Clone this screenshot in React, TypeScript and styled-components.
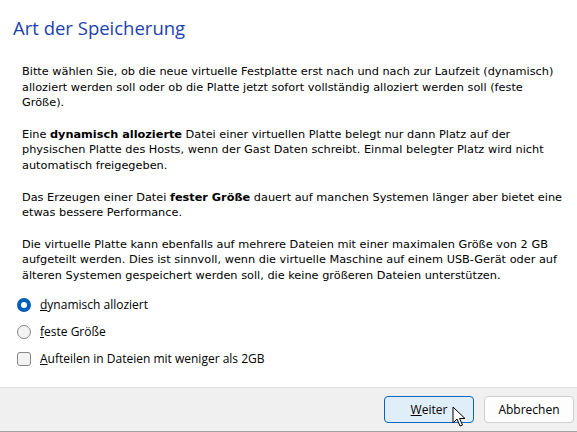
import React from "react";
import styled, { createGlobalStyle } from "styled-components";

const Global = createGlobalStyle`
  html, body { margin: 0; padding: 0; background: #ffffff; }
  body { width: 577px; height: 432px; overflow: hidden; }
`;

const Dialog = styled.div`
  width: 577px;
  height: 432px;
  display: flex;
  flex-direction: column;
  background: #ffffff;
`;

const Content = styled.div`
  flex: 1;
  display: flex;
  flex-direction: column;
  padding: 14px 0 0 13px;
`;

const Title = styled.h1`
  margin: 0;
  font-family: "Open Sans", "Noto Sans", sans-serif;
  font-weight: 400;
  font-size: 18.5px;
  line-height: 27px;
  color: #1d3fae;
`;

const Body = styled.div`
  padding: 23px 0 0 9px;
  font-family: "DejaVu Sans", sans-serif;
  font-size: 11.3px;
  line-height: 15.6px;
  color: #000000;
`;

const Para = styled.p`
  margin: 0 0 16px 0;
  &:last-child {
    margin-bottom: 13px;
  }
`;

const Options = styled.div`
  display: flex;
  flex-direction: column;
  gap: 11px;
  padding: 0 0 0 4px;
`;

const Option = styled.label`
  display: flex;
  align-items: center;
  gap: 9px;
  height: 16px;
  font-family: "Open Sans", "Noto Sans", sans-serif;
  font-size: 12px;
  color: #000;
`;

const Radio = styled.span<{ $checked?: boolean }>`
  box-sizing: border-box;
  width: 14px;
  height: 14px;
  border-radius: 50%;
  background: ${(p) => (p.$checked ? "#ffffff" : "#f3f3f3")};
  border: ${(p) => (p.$checked ? "4px solid #005fb8" : "1px solid #858585")};
`;

const Check = styled.span`
  box-sizing: border-box;
  width: 14px;
  height: 14px;
  border-radius: 3px;
  background: #f3f3f3;
  border: 1px solid #858585;
`;

const Footer = styled.div`
  height: 45px;
  background: #f0f0f0;
  border-top: 1px solid #dfdfdf;
  border-bottom: 1px solid #a0a0a0;
  display: flex;
  justify-content: flex-end;
  align-items: center;
  gap: 10px;
  padding: 0 3px 0 0;
  box-sizing: border-box;
`;

const Button = styled.button<{ $primary?: boolean }>`
  position: relative;
  box-sizing: border-box;
  width: 90px;
  height: 27px;
  border-radius: 4px;
  font-family: "Open Sans", "Noto Sans", sans-serif;
  font-size: 12px;
  color: #000;
  border: 1px solid ${(p) => (p.$primary ? "#0067c0" : "#d0d0d0")};
  background: ${(p) => (p.$primary ? "#e0eef9" : "#fdfdfd")};
  padding: 0;
`;

const Cursor = styled.svg`
  position: absolute;
  left: 67px;
  top: 9px;
`;

const U = styled.span`
  text-decoration: underline;
`;

export default function App() {
  return (
    <>
      <Global />
      <Dialog>
        <Content>
          <Title>Art der Speicherung</Title>
          <Body>
            <Para>
              Bitte wählen Sie, ob die neue virtuelle Festplatte erst nach und nach zur Laufzeit (dynamisch)
              <br />
              alloziert werden soll oder ob die Platte jetzt sofort vollständig alloziert werden soll (feste
              <br />
              Größe).
            </Para>
            <Para>
              Eine <b>dynamisch allozierte</b> Datei einer virtuellen Platte belegt nur dann Platz auf der
              <br />
              physischen Platte des Hosts, wenn der Gast Daten schreibt. Einmal belegter Platz wird nicht
              <br />
              automatisch freigegeben.
            </Para>
            <Para>
              Das Erzeugen einer Datei <b>fester Größe</b> dauert auf manchen Systemen länger aber bietet eine
              <br />
              etwas bessere Performance.
            </Para>
            <Para>
              Die virtuelle Platte kann ebenfalls auf mehrere Dateien mit einer maximalen Größe von 2 GB
              <br />
              aufgeteilt werden. Dies ist sinnvoll, wenn die virtuelle Maschine auf einem USB-Gerät oder auf
              <br />
              älteren Systemen gespeichert werden soll, die keine größeren Dateien unterstützen.
            </Para>
          </Body>
          <Options>
            <Option>
              <Radio $checked />
              <span>
                <U>d</U>ynamisch alloziert
              </span>
            </Option>
            <Option>
              <Radio />
              <span>
                <U>f</U>este Größe
              </span>
            </Option>
            <Option>
              <Check />
              <span>
                <U>A</U>ufteilen in Dateien mit weniger als 2GB
              </span>
            </Option>
          </Options>
        </Content>
        <Footer>
          <Button $primary>
            <U>W</U>eiter
            <Cursor width="14" height="22" viewBox="0 0 14 22">
              <path d="M1 1 L1 17 L5 13 L8 20 L10.5 19 L7.5 12.5 L13 12.5 Z" fill="#ffffff" stroke="#000000" strokeWidth="1" strokeLinejoin="miter" />
            </Cursor>
          </Button>
          <Button>Abbrechen</Button>
        </Footer>
      </Dialog>
    </>
  );
}
